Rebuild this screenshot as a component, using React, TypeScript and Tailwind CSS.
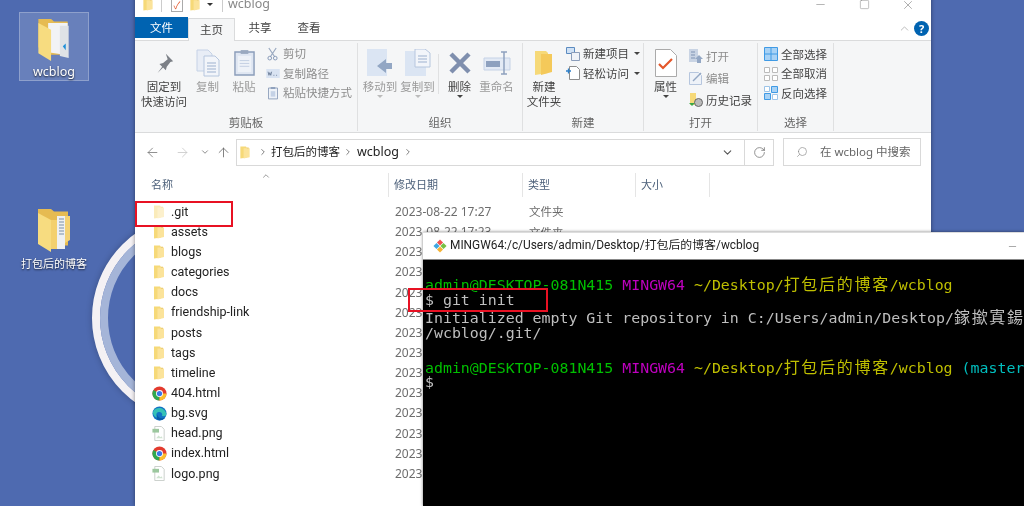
import type { ReactNode } from "react";
import { ArrowLeft, ArrowRight, ArrowUp, ChevronDown, ChevronRight, ChevronUp, RotateCw, Search, X, Minus, Square } from "lucide-react";

const UI_FONT = "font-['Noto_Sans','Noto_Sans_CJK_SC',sans-serif]";
const NARROW_FONT = "font-['Roboto','Noto_Sans_CJK_SC',sans-serif]";

function Folder({ className = "w-[10px] h-[14px]", faded = false }: { className?: string; faded?: boolean }) {
  return (
    <svg viewBox="0 0 10 14" className={`${className} ${faded ? "opacity-50" : ""}`}>
      <path d="M0 0.5h6l1 1.2V12.5L0 13.5z" fill="#f6d978" />
      <path d="M3.5 2.5h6.5v9.5l-6.5 1.5z" fill="#fbe39a" />
      <path d="M7 1.7h2v1H7z" fill="#e8c25c" />
    </svg>
  );
}

function DesktopFolder({ paper }: { paper: "code" | "list" }) {
  return (
    <svg viewBox="0 0 34 44" className="w-[34px] h-[44px]">
      <path d="M1 1h13l3 2.5h14v34H12L1 30z" fill="#e6bb52" />
      {paper === "code" ? (
        <>
          <path d="M11 5h20v33l-20-3z" fill="#f2f3f5" />
          <path d="M23 8h9v33l-9-2z" fill="#dfe2e6" />
          <path d="M26 29l3-3v7z" fill="#1f8fd8" />
        </>
      ) : (
        <>
          <path d="M28 8h5v24l-5 3z" fill="#f4d274" />
          <path d="M20 8h8v33h-8z" fill="#eef0f2" />
          <path d="M22 11h5M22 14h5M22 17h5M22 20h5M22 23h5M22 26h5" stroke="#7a8fa8" strokeWidth="1" />
          <path d="M14 12h6v29h-6z" fill="#f3d06e" />
        </>
      )}
      <path d="M1 5l13 7v32L1 36z" fill="#f7dc80" />
    </svg>
  );
}

function ChromeIcon() {
  return (
    <svg viewBox="0 0 16 16" className="w-[15px] h-[15px]">
      <circle cx="8" cy="8" r="7.5" fill="#e33b2e" />
      <path d="M8 8L1.5 4.2A7.5 7.5 0 0 0 8 15.5z" fill="#2fa84f" />
      <path d="M8 8h7.5A7.5 7.5 0 0 1 8 15.5z" fill="#fbc02d" />
      <circle cx="8" cy="8" r="3.7" fill="#fff" />
      <circle cx="8" cy="8" r="2.8" fill="#3b78e7" />
    </svg>
  );
}

function EdgeIcon() {
  return (
    <svg viewBox="0 0 16 16" className="w-[15px] h-[15px]">
      <circle cx="8" cy="8" r="7.5" fill="#1273c4" />
      <path d="M1 6.5C3 1 13 0 15.4 8.5c.2 2-2.5 2.6-5 2.2C12 9 10 6 7 6.5 4.5 7 4 10 5.5 12.5 3 12 1 10 1 6.5z" fill="#35c1b6" />
      <path d="M6 9c0 3 3 5 8 3.5A7.5 7.5 0 0 1 6.5 15C4.5 13.5 5 11 6 9z" fill="#0a5aa8" />
    </svg>
  );
}

function PngIcon() {
  return (
    <svg viewBox="0 0 14 16" className="w-[14px] h-[15px]">
      <path d="M2.5 .5h7l3 3v12h-10z" fill="#fff" stroke="#c7cdc9" />
      <path d="M0 3h7v4H0z" fill="#9cc79e" />
      <path d="M4 13l2.5-3 2 2 1-1 1.5 2z" fill="#cfe3d0" />
    </svg>
  );
}

function GitLogo() {
  return (
    <svg viewBox="0 0 16 16" className="w-[14px] h-[14px]">
      <path d="M8 .5L11.5 4 8 7.5 4.5 4z" fill="#f0504f" />
      <path d="M12 4.5L15.5 8 12 11.5 8.5 8z" fill="#76c043" />
      <path d="M8 8.5L11.5 12 8 15.5 4.5 12z" fill="#f5b335" />
      <path d="M4 4.5L7.5 8 4 11.5.5 8z" fill="#3fa7e0" />
    </svg>
  );
}

function BigAction({ width, label, icon, caret, dim }: { width: string; label: string[]; icon: ReactNode; caret?: boolean; dim?: boolean }) {
  return (
    <div className={`${width} flex flex-col items-center shrink-0`}>
      <div className="h-[33px] flex items-center justify-center">{icon}</div>
      <div className={`flex flex-col items-center text-[11.5px] leading-[15px] ${dim ? "text-[#9a9a9a]" : "text-[#444]"}`}>
        {label.map(l => <span key={l}>{l}</span>)}
      </div>
      {caret && <span className={`mt-[1px] w-0 h-0 border-x-[3px] border-t-[3px] border-x-transparent ${dim ? "border-t-[#bbb]" : "border-t-[#444]"}`} />}
    </div>
  );
}

function SmallAction({ icon, label, dim, caret }: { icon: ReactNode; label: string; dim?: boolean; caret?: boolean }) {
  return (
    <div className="flex items-center h-[19.5px] gap-[3px]">
      <span className="w-[15px] h-[15px] flex items-center justify-center shrink-0">{icon}</span>
      <span className={`text-[11.5px] whitespace-nowrap ${dim ? "text-[#8d8d8d]" : "text-[#444]"}`}>{label}</span>
      {caret && <span className="ml-[2px] w-0 h-0 border-x-[3px] border-t-[3px] border-x-transparent border-t-[#444]" />}
    </div>
  );
}

function Group({ width, label, children }: { width: string; label: string; children: ReactNode }) {
  return (
    <div className={`${width} h-[88px] mt-[2px] border-r border-[#dfe0e1] flex flex-col shrink-0`}>
      <div className="flex-1 flex pt-[3px] min-h-0">{children}</div>
      <div className="h-[16px] text-center text-[11.5px] leading-[16px] text-[#666]">{label}</div>
    </div>
  );
}

const ROWS: { name: string; kind: "folder" | "chrome" | "edge" | "png"; faded?: boolean }[] = [
  { name: ".git", kind: "folder", faded: true },
  { name: "assets", kind: "folder" },
  { name: "blogs", kind: "folder" },
  { name: "categories", kind: "folder" },
  { name: "docs", kind: "folder" },
  { name: "friendship-link", kind: "folder" },
  { name: "posts", kind: "folder" },
  { name: "tags", kind: "folder" },
  { name: "timeline", kind: "folder" },
  { name: "404.html", kind: "chrome" },
  { name: "bg.svg", kind: "edge" },
  { name: "head.png", kind: "png" },
  { name: "index.html", kind: "chrome" },
  { name: "logo.png", kind: "png" },
];

function FileRow({ row, index }: { row: (typeof ROWS)[number]; index: number }) {
  return (
    <div className="h-[20.15px] flex items-center shrink-0">
      <span className="w-[36px] pl-[19px] flex items-center shrink-0">
        {row.kind === "folder" && <Folder faded={row.faded} />}
        {row.kind === "chrome" && <span className="-ml-[2px]"><ChromeIcon /></span>}
        {row.kind === "edge" && <span className="-ml-[2px]"><EdgeIcon /></span>}
        {row.kind === "png" && <span className="-ml-[2px]"><PngIcon /></span>}
      </span>
      <span className={`w-[224px] text-[12.5px] text-[#222] shrink-0 ${NARROW_FONT}`}>{row.name}</span>
      <span className="w-[134px] text-[12px] text-[#6d6d6d] shrink-0">2023-08-22 17:{index === 0 ? "27" : "23"}</span>
      <span className="text-[11.5px] text-[#6d6d6d]">文件夹</span>
    </div>
  );
}

function Explorer() {
  return (
    <div className={`absolute left-[135px] -top-[8px] w-[796px] h-[514px] bg-white flex flex-col shadow-[0_0_4px_rgba(0,0,0,0.45)] ${UI_FONT}`}>
      {/* title bar */}
      <div className="h-[25px] flex items-center pl-[8px] shrink-0 relative">
        <Folder className="w-[10px] h-[13px]" />
        <span className="ml-[8px] w-px h-[14px] bg-[#ccc]" />
        <span className="ml-[9px] w-[12px] h-[14px] border border-[#aaa] text-[#e2572b] text-[10px] leading-[12px] text-center">✓</span>
        <span className="ml-[7px]"><Folder className="w-[10px] h-[13px]" /></span>
        <span className="ml-[7px] w-0 h-0 border-x-[3px] border-t-[3px] border-x-transparent border-t-[#333]" />
        <span className="ml-[9px] w-px h-[14px] bg-[#ccc]" />
        <span className="ml-[5px] text-[12.5px] text-[#888]">wcblog</span>
        <div className="ml-auto flex items-center text-[#777] pr-px">
          <span className="w-[44px] flex justify-center"><Minus size={13} strokeWidth={1} /></span>
          <span className="w-[44px] flex justify-center"><Square size={11} strokeWidth={1} /></span>
          <span className="w-[44px] flex justify-center"><X size={14} strokeWidth={1} /></span>
        </div>
      </div>
      {/* tabs */}
      <div className="h-[23px] flex items-end shrink-0 text-[11.5px] text-[#444] relative">
        <div className="w-[53px] h-[21px] bg-[#0063b1] text-white flex items-center justify-center mb-[2px]">文件</div>
        <div className="w-[47px] h-[23px] bg-[#f5f6f7] border-x border-t border-[#dadbdc] flex items-center justify-center -mb-px z-10">主页</div>
        <div className="w-[50px] h-[21px] flex items-center justify-center mb-[2px]">共享</div>
        <div className="w-[48px] h-[21px] flex items-center justify-center mb-[2px]">查看</div>
        <div className="ml-auto mb-[4px] pr-[2px] flex items-center gap-[3px]">
          <ChevronUp size={13} className="text-[#999]" strokeWidth={1.2} />
          <span className="w-[15px] h-[15px] rounded-full bg-[#0063b1] text-white text-[11px] font-bold leading-[15px] text-center">?</span>
        </div>
      </div>
      {/* ribbon */}
      <div className="h-[93px] bg-[#f5f6f7] border-y border-[#dadbdc] flex shrink-0">
        <Group width="w-[223px]" label="剪贴板">
          <div className="flex w-full">
            <BigAction width="w-[52px] ml-[3px]" label={["固定到", "快速访问"]} icon={
              <svg viewBox="0 0 24 24" className="w-[22px] h-[22px]"><path d="M14 2l8 8-3 1-4 5-1 4-3-3-6 6 5-7-3-3 4-1 5-4z" fill="#7c8087" /></svg>
            } />
            <BigAction width="w-[35px]" dim label={["复制"]} icon={
              <svg viewBox="0 0 24 28" className="w-[24px] h-[28px]"><path d="M1 1h11l4 4v17H1z" fill="#e8edf6" stroke="#c5d2e6" /><path d="M8 7h11l4 4v16H8z" fill="#f2f5fa" stroke="#b6c6de" /><path d="M11 14h9M11 17h9M11 20h9M11 23h9" stroke="#9db1cf" /></svg>
            } />
            <BigAction width="w-[38px] mr-[2px]" dim label={["粘贴"]} icon={
              <svg viewBox="0 0 22 28" className="w-[21px] h-[27px]"><path d="M1 3h20v24H1z" fill="#dfe6f2" stroke="#8b9dba" strokeWidth="1.5" /><path d="M4 7h14v17H4z" fill="#eef2f8" /><path d="M7 1h8v4H7z" fill="#9aa9c0" /><path d="M6 12h10M6 15h10M6 18h10" stroke="#c2cfe2" /></svg>
            } />
            <div className="flex flex-col -mt-[2px]">
              <SmallAction dim label="剪切" icon={<svg viewBox="0 0 12 15" className="w-[11px] h-[14px]"><path d="M2 1l6 9M10 1L4 10" stroke="#9aa9c0" strokeWidth="1.3" /><circle cx="3" cy="12" r="2" fill="none" stroke="#7f93b3" /><circle cx="9" cy="12" r="2" fill="none" stroke="#7f93b3" /></svg>} />
              <SmallAction dim label="复制路径" icon={<svg viewBox="0 0 15 10" className="w-[14px] h-[9px]"><path d="M0 0h15v10H0z" fill="#d9e3f2" /><path d="M2 3l1 4 1-3 1 3 1-4M8 7h1M11 7h1" stroke="#6d7f9a" fill="none" /></svg>} />
              <SmallAction dim label="粘贴快捷方式" icon={<svg viewBox="0 0 11 14" className="w-[10px] h-[14px]"><path d="M.5 1.5h10v12H.5z" fill="#eef2f8" stroke="#8b9dba" /><path d="M3 .5h5v2H3z" fill="#8b9dba" /><path d="M3 5h5v6H3z" fill="#c5d2e6" /></svg>} />
            </div>
          </div>
        </Group>
        <Group width="w-[165px]" label="组织">
          <div className="flex w-full pl-[3px]">
            <BigAction width="w-[38px]" dim caret label={["移动到"]} icon={
              <svg viewBox="0 0 26 28" className="w-[26px] h-[28px]"><path d="M0 0h20v27H0z" fill="#dbe5f3" /><path d="M19 10v4h6v6h-6v4l-9-7z" fill="#93a7c4" /></svg>
            } />
            <BigAction width="w-[37px]" dim caret label={["复制到"]} icon={
              <svg viewBox="0 0 26 28" className="w-[26px] h-[28px]"><path d="M0 2h21v25H0z" fill="#dbe5f3" /><path d="M10 0h10l5 4v14H10z" fill="#f2f5fa" stroke="#b6c6de" /><path d="M13 7h9M13 10h9M13 13h9" stroke="#9db1cf" /></svg>
            } />
            <div className="w-px h-[40px] mt-[8px] bg-[#e0e1e2] mx-[2px]" />
            <BigAction width="w-[37px]" caret label={["删除"]} icon={
              <svg viewBox="0 0 24 24" className="w-[24px] h-[24px]"><path d="M3 3l18 18M21 3L3 21" stroke="#7f8fae" strokeWidth="4.5" /></svg>
            } />
            <BigAction width="w-[37px]" dim label={["重命名"]} icon={
              <svg viewBox="0 0 28 26" className="w-[28px] h-[26px]"><path d="M1 8h26v12H1z" fill="#e3eaf5" stroke="#c5d2e6" /><path d="M3 11h14v6H3z" fill="#8ea1bf" /><path d="M18 2h6M18 24h6M21 2v22" stroke="#8ea1bf" strokeWidth="1.5" /></svg>
            } />
          </div>
        </Group>
        <Group width="w-[121px]" label="新建">
          <div className="flex w-full">
            <BigAction width="w-[42px]" label={["新建", "文件夹"]} icon={
              <svg viewBox="0 0 18 26" className="w-[18px] h-[26px]"><path d="M0 1h11l2 2v20L0 25z" fill="#f6d978" /><path d="M6 4h11v18l-11 3z" fill="#f4c95a" /></svg>
            } />
            <div className="flex flex-col -mt-[2px]">
              <SmallAction caret label="新建项目" icon={<svg viewBox="0 0 14 14" className="w-[14px] h-[14px]"><path d="M.5.500h8v6h-8z" fill="#cfe1f5" stroke="#5b8bc0" /><path d="M5.500 5.500h8v8h-8z" fill="#eef2f8" stroke="#8b9dba" /></svg>} />
              <SmallAction caret label="轻松访问" icon={<svg viewBox="0 0 14 14" className="w-[14px] h-[14px]"><path d="M3.500 .5h7l3 3v10h-10z" fill="#fff" stroke="#8d8d8d" /><path d="M0 5h5M2.500 2.500v5" stroke="#2c7fc9" strokeWidth="1.3" /></svg>} />
            </div>
          </div>
        </Group>
        <Group width="w-[114px]" label="打开">
          <div className="flex w-full">
            <BigAction width="w-[43px]" caret label={["属性"]} icon={
              <svg viewBox="0 0 22 28" className="w-[22px] h-[28px]"><path d="M.5.500h15l6 6v21H.5z" fill="#fff" stroke="#aaa" /><path d="M4 15l4 4 9-9" fill="none" stroke="#e4572a" strokeWidth="2.2" /></svg>
            } />
            <div className="flex flex-col ml-[1px] mt-[0.5px] gap-[2.5px]">
              <SmallAction dim label="打开" icon={<svg viewBox="0 0 14 14" className="w-[14px] h-[14px]"><path d="M0 0h9v13H0z" fill="#c9d4e4" /><path d="M2 3h4M2 6h4M2 9h4" stroke="#7f93b3" /><path d="M10 6l4 4h-2v4H8v-4H6z" fill="#93a7c4" /></svg>} />
              <SmallAction dim label="编辑" icon={<svg viewBox="0 0 14 14" className="w-[14px] h-[14px]"><path d="M.5 1.500h9l3 3v9H.5z" fill="#eef2f8" stroke="#b6c6de" /><path d="M4 10l8-8" stroke="#93a7c4" strokeWidth="1.500" /></svg>} />
              <SmallAction label="历史记录" icon={<svg viewBox="0 0 14 14" className="w-[14px] h-[14px]"><path d="M1 0h6v12H1z" fill="#f6d978" /><circle cx="9.500" cy="9.500" r="4" fill="#bbb" stroke="#666" /><path d="M0 10l3 3 3-3z" fill="#3aa648" /></svg>} />
            </div>
          </div>
        </Group>
        <Group width="w-[76px]" label="选择">
          <div className="flex flex-col pl-[5px] -mt-[1.5px]">
            <SmallAction label="全部选择" icon={<svg viewBox="0 0 14 14" className="w-[14px] h-[14px]"><path d="M.5.500h13v13H.5zM7 .5v13M.5 7h13" fill="#a8d2f5" stroke="#3f9ae5" /></svg>} />
            <SmallAction label="全部取消" icon={<svg viewBox="0 0 14 14" className="w-[14px] h-[14px]"><path d="M.5.500h5v5h-5zM8.500.5h5v5h-5zM.5 8.500h5v5h-5zM8.500 8.500h5v5h-5z" fill="#fff" stroke="#bbb" /></svg>} />
            <SmallAction label="反向选择" icon={<svg viewBox="0 0 14 14" className="w-[14px] h-[14px]"><path d="M.5.500h5v5h-5zM8.500 8.500h5v5h-5z" fill="#fff" stroke="#9cc4e8" /><path d="M7.500.5h6v6h-6zM.5 7.500h6v6h-6z" fill="#a8d2f5" stroke="#3f9ae5" /></svg>} />
          </div>
        </Group>
      </div>
      {/* address row */}
      <div className="h-[38px] flex items-center shrink-0 text-[#888]">
        <ArrowLeft size={15} className="ml-[10px] text-[#777]" strokeWidth={1.3} />
        <ArrowRight size={15} className="ml-[15px] text-[#c8c8c8]" strokeWidth={1.3} />
        <ChevronDown size={10} className="ml-[10px] text-[#777]" />
        <ArrowUp size={15} className="ml-[6px] text-[#666]" strokeWidth={1.3} />
        <div className="ml-[5px] w-[538px] h-[27px] border border-[#d9d9d9] flex items-center shrink-0">
          <span className="ml-[3px]"><Folder className="w-[10px] h-[13px]" /></span>
          <ChevronRight size={10} className="ml-[8px] text-[#666]" />
          <span className="ml-[3px] text-[11.5px] text-[#222]">打包后的博客</span>
          <ChevronRight size={10} className="ml-[3px] text-[#666]" />
          <span className="ml-[4px] text-[12.5px] text-[#222]">wcblog</span>
          <ChevronRight size={10} className="ml-[4px] text-[#666]" />
          <ChevronDown size={13} className="ml-auto mr-[10px] text-[#555]" />
          <div className="w-[29px] h-full border-l border-[#d9d9d9] flex items-center justify-center">
            <RotateCw size={13} className="text-[#666]" strokeWidth={1.3} />
          </div>
        </div>
        <div className="ml-[9px] w-[138px] h-[28px] border border-[#d9d9d9] flex items-center shrink-0">
          <Search size={12} className="ml-[12px] -scale-x-100 text-[#888]" strokeWidth={1.3} />
          <span className="ml-[12px] text-[11.5px] text-[#666]">在 wcblog 中搜索</span>
        </div>
      </div>
      {/* column header */}
      <div className="h-[28px] flex text-[11px] text-[#4c607a] relative shrink-0">
        <div className="w-[254px] pl-[16px] flex items-center border-r border-[#e5e5e5] my-[2px] relative">
          名称
          <ChevronUp size={10} className="absolute left-[126px] -top-[2px] text-[#888]" />
        </div>
        <div className="w-[134px] pl-[5px] flex items-center border-r border-[#e5e5e5] my-[2px]">修改日期</div>
        <div className="w-[113px] pl-[5px] flex items-center border-r border-[#e5e5e5] my-[2px]">类型</div>
        <div className="w-[74px] pl-[5px] flex items-center border-r border-[#e5e5e5] my-[2px]">大小</div>
      </div>
      {/* files */}
      <div className="flex flex-col mt-[3px]">
        {ROWS.map((r, i) => <FileRow key={r.name} row={r} index={i} />)}
      </div>
    </div>
  );
}

function Cjk({ children }: { children: string }) {
  return <span className="font-['Noto_Sans_CJK_SC',sans-serif] text-[16px] tracking-[1.7px]">{children}</span>;
}

function TermLine({ children }: { children?: ReactNode }) {
  return <div className="h-[16.5px] leading-[16.5px]">{children}</div>;
}

function PromptLine({ branch }: { branch?: boolean }) {
  return (
    <TermLine>
      <span className="text-[#00bf00]">admin@DESKTOP-081N415 </span>
      <span className="text-[#bf00bf]">MINGW64 </span>
      <span className="text-[#bfbf00]">~/Desktop/<Cjk>打包后的博客</Cjk>/wcblog</span>
      {branch && <span className="text-[#00bfbf]"> (master)</span>}
    </TermLine>
  );
}

function Terminal() {
  return (
    <div className="absolute left-[423px] top-[232px] w-[601px] h-[274px] flex flex-col overflow-hidden shadow-[0_0_3px_rgba(0,0,0,0.5)]">
      <div className={`h-[28px] bg-white border-t border-b border-t-[#ddd] border-b-[#888] flex items-center pl-[10px] shrink-0 ${NARROW_FONT}`}>
        <GitLogo />
        <span className="ml-[3px] text-[11.9px] text-[#222] whitespace-nowrap">MINGW64:/c/Users/admin/Desktop/打包后的博客/wcblog</span>
        <Minus size={11} strokeWidth={1} className="ml-auto mr-[6px] text-[#444]" />
      </div>
      <div className="flex-1 bg-black pt-[15px] pl-[2px] font-['DejaVu_Sans_Mono',monospace] text-[14.9px] text-[#bfbfbf] whitespace-nowrap">
        <PromptLine />
        <TermLine>$ git init</TermLine>
        <TermLine>Initialized empty Git repository in C:/Users/admin/Desktop/<Cjk>鎵撳寘鍚庣殑鍗氬</Cjk></TermLine>
        <TermLine>/wcblog/.git/</TermLine>
        <TermLine />
        <PromptLine branch />
        <TermLine>$</TermLine>
      </div>
    </div>
  );
}

export default function App() {
  return (
    <div className="relative w-[1024px] h-[506px] overflow-hidden bg-[#4e6ab0] blur-[0.35px]">
      {/* wallpaper ring */}
      <div className="absolute left-[92px] top-[214px] w-[208px] h-[208px] rounded-full border-[8px] border-[#f4f1f4] shadow-[0_0_6px_rgba(0,0,0,0.25)]">
        <div className="w-full h-full rounded-full border-[8px] border-[#a5b5d8]" />
      </div>

      {/* desktop icons */}
      <div className={`absolute left-[19px] top-[12px] w-[70px] h-[69px] bg-white/15 border border-white/25 flex flex-col items-center pt-[5px] ${UI_FONT}`}>
        <DesktopFolder paper="code" />
        <span className="text-[12.5px] leading-[16px] mt-[3px] text-white [text-shadow:0_1px_2px_rgba(0,0,0,0.8)]">wcblog</span>
      </div>
      <div className={`absolute left-[14px] top-[208px] w-[80px] flex flex-col items-center ${UI_FONT}`}>
        <DesktopFolder paper="list" />
        <span className="text-[11px] leading-[16px] mt-[4px] text-white whitespace-nowrap [text-shadow:0_1px_2px_rgba(0,0,0,0.8)]">打包后的博客</span>
      </div>

      <Explorer />
      <Terminal />

      {/* red callouts */}
      <div className="absolute left-[135px] top-[201px] w-[98px] h-[26px] border-2 border-[#e81123]" />
      <div className="absolute left-[408px] top-[288px] w-[140px] h-[24px] border-2 border-[#e81123]" />
    </div>
  );
}
